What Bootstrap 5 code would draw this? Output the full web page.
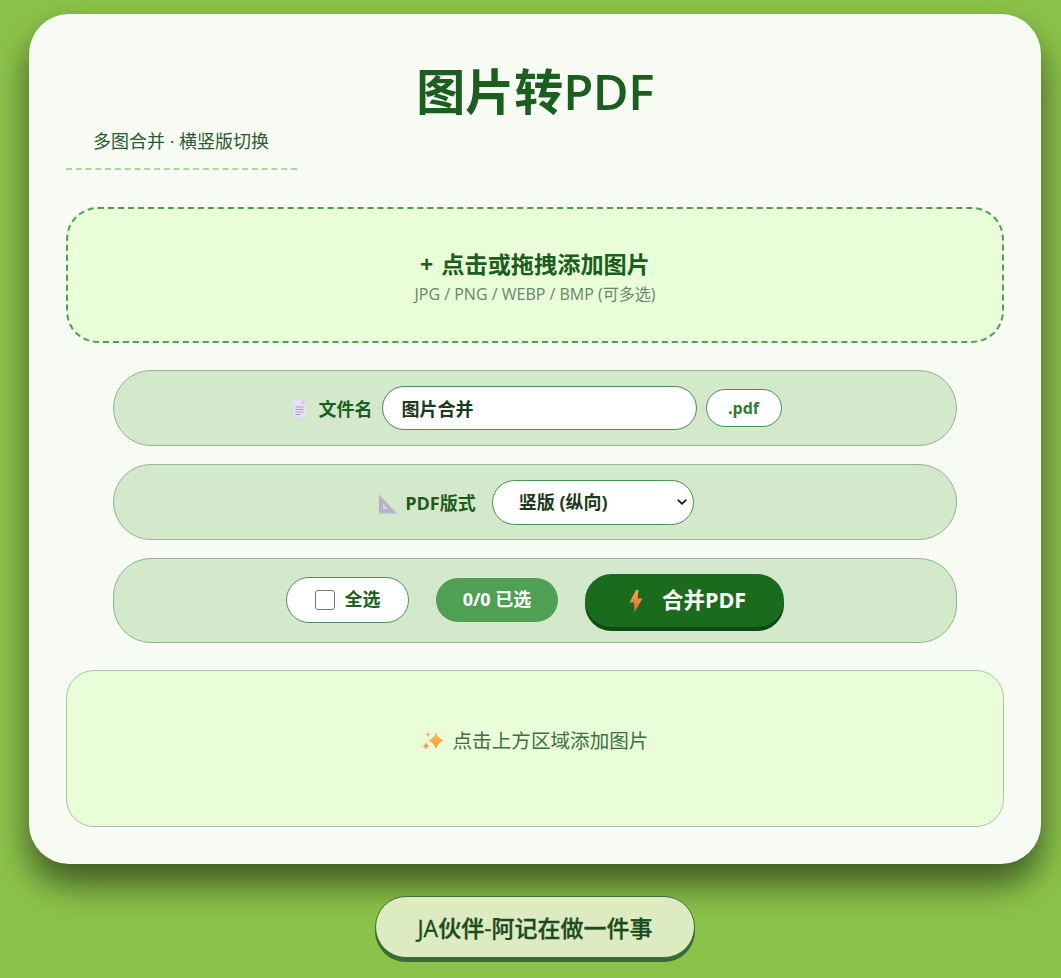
<!DOCTYPE html>
<html lang="zh-CN">
<head>
  <meta charset="UTF-8" />
  <meta name="viewport" content="width=device-width, initial-scale=1" />
  <title>图片转PDF</title>
  <link href="https://cdn.jsdelivr.net/npm/bootstrap@5.3.3/dist/css/bootstrap.min.css" rel="stylesheet" />
  <style>
    html, body { height: 978px; overflow: hidden; }
    body {
      background: #8bc34a;
      font-family: "Open Sans", "Noto Sans CJK SC", sans-serif;
      color: #1b5e20;
      padding: 14px 20px 0 29px;
    }
    .app-box {
      height: 850px;
      background: #f7fbf3;
      border-radius: 40px;
      padding: 37px;
      box-shadow: 0 20px 35px rgba(0, 0, 0, .55);
    }
    .app-title { font-size: 49px; font-weight: 700; line-height: 80px; margin: 0 0 -3px; color: #1b5e20; text-align: center; }
    .title-latin { font-weight: 650; letter-spacing: -.5px; }
    .app-sub {
      display: inline-block;
      font-size: 18px;
      line-height: 26px;
      padding: 0 28px 14px 27px;
      border-bottom: 2px dashed #aed5a0;
      color: #2b5a30;
      margin-bottom: 37px;
      vertical-align: top;
    }
    .drop-box {
      height: 136px;
      padding-top: 7px;
      background: #e8fdd8;
      border: 2px dashed #4f9f54;
      border-radius: 32px;
      margin-bottom: 27px;
    }
    .drop-title { font-size: 23.200px; font-weight: 700; line-height: 30px; word-spacing: 2px; }
    .drop-hint { font-size: 16px; line-height: 30px; color: #64896a; }
    .tool-row {
      width: 844px;
      background: #d4e8cc;
      border: 1px solid #8cb88c;
      border-radius: 38px;
      margin: 0 auto 18px;
      font-weight: 700;
      font-size: 18px;
    }
    .tool-row label.row-label { margin-top: 2px; }
    .file-icon { margin-top: 2px; margin-right: 10px; }
    .row-file, .row-format { height: 76px; }
    .row-action { height: 85px; margin-bottom: 27px; gap: 27px; }
    .tool-row .form-control, .tool-row .form-select {
      border: 1px solid #4f8f56;
      font-weight: 700;
      font-size: 18px;
      color: #1c3a20;
      box-shadow: none;
    }
    .name-input { width: 315px; height: 44px; padding: 0 19px; margin: 0 9px; }
    .ext-pill {
      width: 76px; height: 38px; background: #fff; border: 1px solid #4f8f56;
      border-radius: 19px; color: #2e7d32; font-size: 16px;
    }
    .format-select {
      width: 202px; height: 45px; padding: 0 30px 0 26px;
      background-size: 12px 10px;
      background-position: right 5px center;
      background-image: url("data:image/svg+xml,%3csvg xmlns='http://www.w3.org/2000/svg' viewBox='0 0 16 16'%3e%3cpath fill='none' stroke='%23222' stroke-linecap='round' stroke-linejoin='round' stroke-width='3' d='m2 5 6 6 6-6'/%3e%3c/svg%3e");
    }
    .pick-pill {
      width: 123px; height: 46px; background: #fff; border: 1px solid #4f8f56;
      border-radius: 23px; margin: -2px 0 0; gap: 10px;
    }
    .pick-pill .form-check-input {
      width: 20px; height: 20px; margin: 0; border: 1px solid #777; border-radius: 3px;
    }
    .count-pill {
      width: 122px; height: 44px; background: #4f9f54; color: #fff; border-radius: 22px; margin-top: -2px;
    }
    .merge-btn {
      width: 199px; height: 53px; padding: 0 0 0 6px; background: #1b6b1f; color: #fff; border: 0;
      border-radius: 27px; font-size: 21.500px; font-weight: 700;
      box-shadow: 0 4px 0 #0f4a14;
      gap: 19px;
    }
    .merge-btn:hover { background: #1b6b1f; color: #fff; }
    .list-box {
      height: 157px;
      background: #e8fdd8;
      border: 1px solid #a3c9a0;
      border-radius: 28px;
      padding-top: 55px;
      font-size: 19.600px;
      line-height: 30px;
      color: #3f7044;
      gap: 9px;
    }
    .foot-btn {
      display: block;
      width: 320px; height: 62px;
      margin: 32px 0 0 346px;
      padding-top: 8px;
      background: #dcebc0;
      color: #1c4a20;
      border: 1px solid #3f6f38;
      border-radius: 31px;
      font-size: 23px;
      font-weight: 500;
      -webkit-text-stroke: .3px #1c4a20;
      box-shadow: 0 4px 0 #3a6b35;
    }
    .foot-btn:hover { background: #dcebc0; color: #1c4a20; }
  </style>
</head>
<body>

  <div class="app-box">
    <h1 class="app-title">图片转<span class="title-latin">PDF</span></h1>
    <div class="app-sub">多图合并 · 横竖版切换</div>

    <div class="drop-box d-flex flex-column justify-content-center align-items-center">
      <div class="drop-title">+ 点击或拖拽添加图片</div>
      <div class="drop-hint">JPG / PNG / WEBP / BMP (可多选)</div>
    </div>

    <div class="tool-row row-file d-flex justify-content-center align-items-center">
      <svg class="file-icon" width="20" height="20" viewBox="-4 0 20 20">
        <path d="M0 1h9l4 4v14H0z" fill="#e8dff4" />
        <path d="M9 1l4 4H9z" fill="#d0c5e2" />
        <path d="M2.500 8h8M2.500 10.500h8M2.500 13h8M2.500 15.500h5" stroke="#a99bc6" stroke-width="1" />
      </svg>
      <label class="row-label flex-shrink-0">文件名</label>
      <input class="form-control rounded-pill name-input" type="text" value="图片合并" />
      <span class="ext-pill d-flex justify-content-center align-items-center">.pdf</span>
    </div>

    <div class="tool-row row-format d-flex justify-content-center align-items-center">
      <svg class="me-2 mt-1" width="21" height="20" viewBox="-3 0 21 20">
        <path d="M0 .500L18 19.500H0z" fill="#b5b3c8" />
        <path d="M4 9.500v5.500h5z" fill="#d6d6de" />
      </svg>
      <label class="row-label me-3">PDF版式</label>
      <select class="form-select rounded-pill format-select">
        <option>竖版 (纵向)</option>
        <option>横版 (横向)</option>
      </select>
    </div>

    <div class="tool-row row-action d-flex justify-content-center align-items-center">
      <label class="pick-pill d-flex justify-content-center align-items-center">
        <input class="form-check-input" type="checkbox" />
        <span>全选</span>
      </label>
      <span class="count-pill d-flex justify-content-center align-items-center">0/0 已选</span>
      <button class="btn merge-btn d-flex justify-content-center align-items-center" type="button">
        <svg width="14" height="22" viewBox="0 0 14 22">
          <defs>
            <linearGradient id="boltFill" x1="0" y1="0" x2="0" y2="1">
              <stop offset="0" stop-color="#f6a93f" />
              <stop offset="1" stop-color="#e8663a" />
            </linearGradient>
          </defs>
          <path d="M7 0L.5 12.500h4.500L5.500 22 13.500 8.500H8.500L9.500 0z" fill="url(#boltFill)" />
        </svg>
        <span>合并PDF</span>
      </button>
    </div>

    <div class="list-box d-flex justify-content-center align-items-start">
      <svg class="mt-1" width="22" height="21" viewBox="0 0 22 21">
        <defs>
          <linearGradient id="starFill" x1="0" y1="0" x2="0" y2="1">
            <stop offset="0" stop-color="#fdc15a" />
            <stop offset="1" stop-color="#f79a3e" />
          </linearGradient>
        </defs>
        <path d="M14 2Q16 8.500 22 10.500 16 12.500 14 19 12 12.500 6 10.500 12 8.500 14 2z" fill="url(#starFill)" />
        <path d="M6 1.500Q6.600 4 9 4.500 6.600 5 6 7.500 5.400 5 3 4.500 5.400 4 6 1.500z" fill="#f6bf7a" />
        <path d="M4 12Q4.700 15.300 8 16 4.700 16.700 4 20 3.300 16.700 0 16 3.300 15.300 4 12z" fill="#f29b4b" />
      </svg>
      <span>点击上方区域添加图片</span>
    </div>
  </div>

  <a class="btn foot-btn d-flex justify-content-center align-items-center" href="#">JA伙伴-阿记在做一件事</a>

  <script src="https://cdn.jsdelivr.net/npm/bootstrap@5.3.3/dist/js/bootstrap.bundle.min.js"></script>
</body>
</html>
